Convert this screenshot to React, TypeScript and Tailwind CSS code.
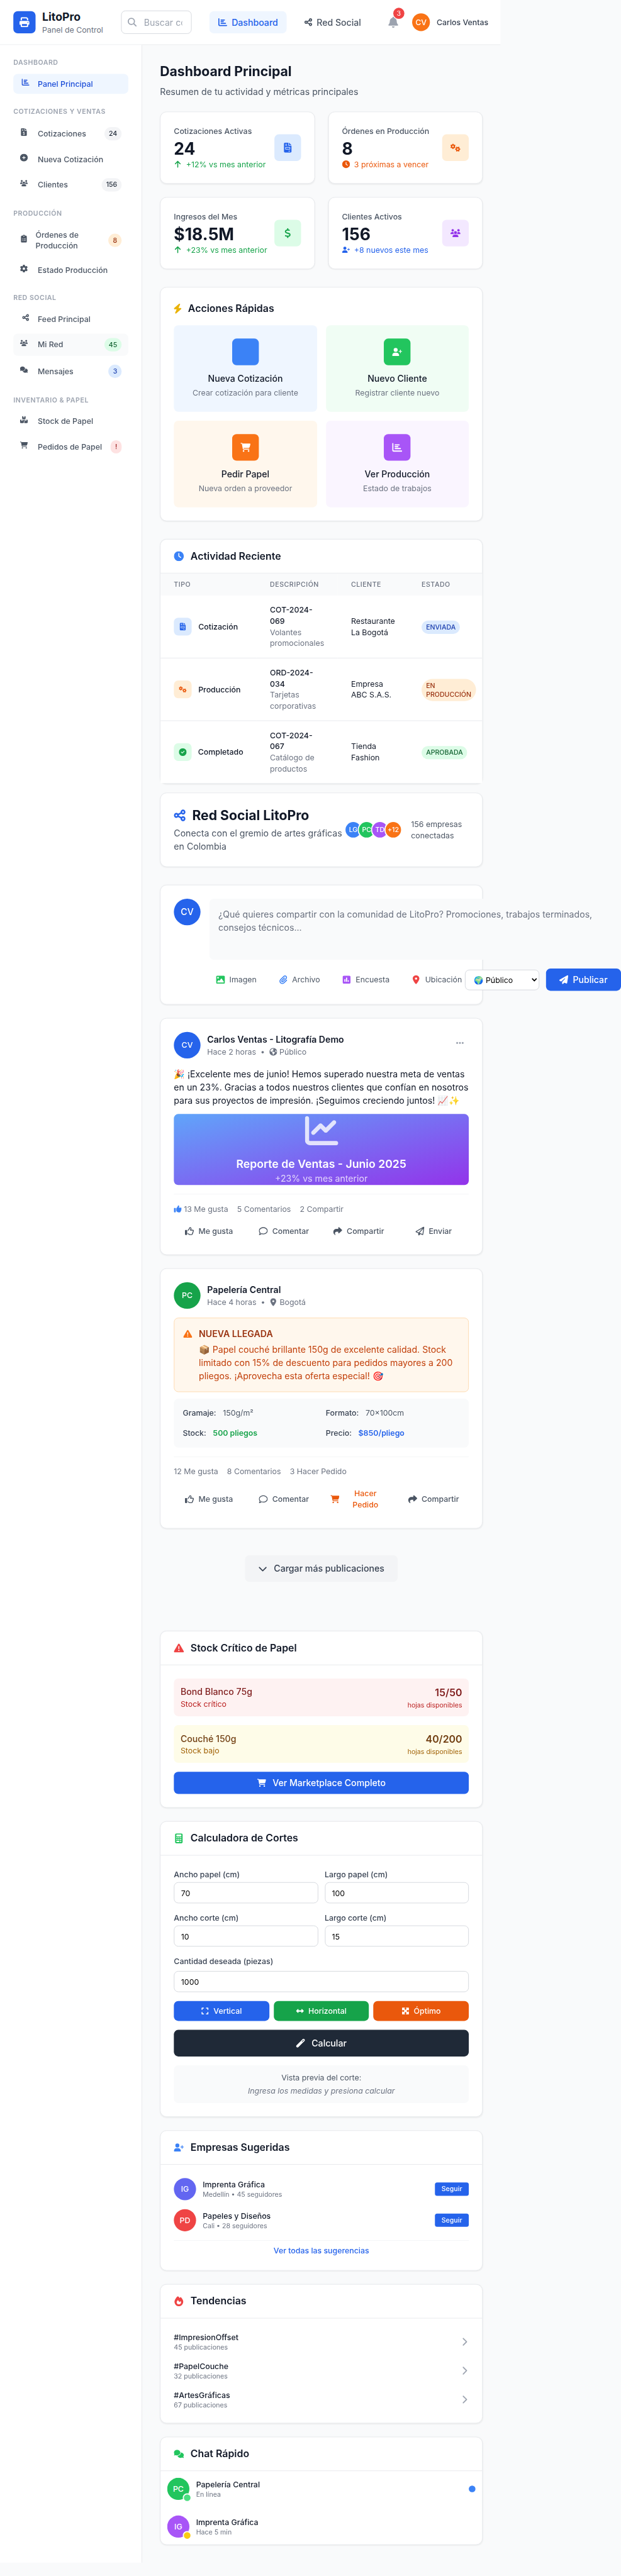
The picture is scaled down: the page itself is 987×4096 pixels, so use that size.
import React from "react";
import {
  FaArrowUp, FaBell, FaBoxesStacked, FaCalculator, FaCartShopping, FaChartBar, FaChartLine,
  FaChevronDown, FaChevronRight, FaCircleCheck, FaCirclePlus, FaClipboardList, FaClock, FaComments,
  FaDollarSign, FaEarthAmericas, FaEllipsis, FaExpand, FaFileInvoice, FaFileInvoiceDollar, FaFire,
  FaGear, FaGears, FaImage, FaLeftRight, FaLocationDot, FaMagnifyingGlass, FaMaximize, FaPaperPlane,
  FaPaperclip, FaPrint, FaRegComment, FaRegPaperPlane, FaRegThumbsUp, FaShare, FaSquarePollVertical,
  FaThumbsUp, FaTriangleExclamation, FaUserPlus, FaUsers, FaWandMagic,
} from "react-icons/fa6";

type IconType = React.ComponentType<{ className?: string }>;

const ShareNodes: IconType = ({ className }) => (
  <svg viewBox="0 0 448 512" fill="currentColor" className={className}>
    <path
      fillRule="evenodd"
      d="M448 128C448 181 405 224 352 224C326.1 224 302.6 213.8 285.4 197.1L191.3 244.1C191.8 248 192 252 192 256C192 260 191.8 264 191.3 267.9L285.4 314.9C302.6 298.2 326.1 288 352 288C405 288 448 331 448 384C448 437 405 480 352 480C299 480 256 437 256 384C256 380 256.2 376 256.7 372.1L162.6 325.1C145.4 341.8 121.9 352 96 352C43 352 0 309 0 256C0 203 43 160 96 160C121.9 160 145.4 170.2 162.6 186.9L256.7 139.9C256.2 136 256 132 256 128C256 75 299 32 352 32C405 32 448 75 448 128zM96 288C113.7 288 128 273.7 128 256C128 238.3 113.7 224 96 224C78.3 224 64 238.3 64 256C64 273.7 78.3 288 96 288zM352 96C334.3 96 320 110.3 320 128C320 145.7 334.3 160 352 160C369.7 160 384 145.7 384 128C384 110.3 369.7 96 352 96zM352 416C369.7 416 384 401.7 384 384C384 366.3 369.7 352 352 352C334.3 352 320 366.3 320 384C320 401.7 334.3 416 352 416z"
    />
  </svg>
);

const Bolt: IconType = ({ className }) => (
  <svg viewBox="0 0 384 512" fill="currentColor" className={className}>
    <path d="M240.5 224H352C365.3 224 377.3 232.3 381.1 244.7C386.6 257.2 383.1 271.3 373.1 280.1L117.1 504.1C105.8 513.9 89.27 514.7 77.19 505.9C65.1 497.1 60.7 481.1 66.59 467.4L143.5 288H31.1C18.67 288 6.733 279.7 2.044 267.3C-2.645 254.8 .8944 240.7 10.93 231.9L266.9 7.918C278.2-1.92 294.7-2.669 306.8 6.114C318.9 14.9 323.3 30.87 317.4 44.61L240.5 224z" />
  </svg>
);

const card = "rounded-xl border border-[#e5e7eb] bg-white shadow-[0_1px_2px_0_rgba(0,0,0,0.05)]";

interface NavItem {
  icon: IconType;
  label: string;
  badge?: string;
  badgeClass?: string;
  rowClass?: string;
  centered?: boolean;
  narrow?: boolean;
}

const gray = "bg-[#f3f4f6] text-[#1f2937]";

const sections: { title: string; items: NavItem[] }[] = [
  {
    title: "Dashboard",
    items: [{ icon: FaChartBar, label: "Panel Principal", rowClass: "bg-[#eff6ff] text-[#1d4ed8]", centered: true }],
  },
  {
    title: "Cotizaciones y Ventas",
    items: [
      { icon: FaFileInvoiceDollar, label: "Cotizaciones", badge: "24", badgeClass: gray },
      { icon: FaCirclePlus, label: "Nueva Cotización" },
      { icon: FaUsers, label: "Clientes", badge: "156", badgeClass: gray },
    ],
  },
  {
    title: "Producción",
    items: [
      { icon: FaClipboardList, label: "Órdenes de Producción", badge: "8", badgeClass: "bg-[#ffedd5] text-[#9a3412]", narrow: true },
      { icon: FaGear, label: "Estado Producción" },
    ],
  },
  {
    title: "Red Social",
    items: [
      { icon: ShareNodes, label: "Feed Principal", centered: true },
      { icon: FaUsers, label: "Mi Red", badge: "45", badgeClass: "bg-[#dcfce7] text-[#166534]", rowClass: "bg-[#f9fafb] text-[#4b5563]" },
      { icon: FaComments, label: "Mensajes", badge: "3", badgeClass: "bg-[#dbeafe] text-[#1e40af]" },
    ],
  },
  {
    title: "Inventario & Papel",
    items: [
      { icon: FaBoxesStacked, label: "Stock de Papel" },
      { icon: FaCartShopping, label: "Pedidos de Papel", badge: "!", badgeClass: "bg-[#fee2e2] text-[#991b1b]" },
    ],
  },
];

function Header() {
  return (
    <header className="flex h-[81px] w-[901px] items-center border-b border-[#e5e7eb] bg-white pl-6">
      <div className="flex w-[162px] items-center gap-3">
        <div className="flex h-10 w-10 shrink-0 items-center justify-center rounded-lg bg-[#2563eb] text-white">
          <FaPrint className="h-[18px] w-auto" />
        </div>
        <div className="whitespace-nowrap">
          <div className="text-xl leading-7 font-bold text-[#111827]">LitoPro</div>
          <div className="text-sm text-[#6b7280]">Panel de Control</div>
        </div>
      </div>
      <div className="relative ml-8 w-[127px]">
        <FaMagnifyingGlass className="absolute top-[13px] left-3 h-4 w-4 text-[#9ca3af]" />
        <input
          className="h-[42px] w-full rounded-lg border border-[#d1d5db] bg-white pr-4 pl-10 text-base placeholder:text-[#9ca3af]"
          placeholder="Buscar cotizaciones..."
        />
      </div>
      <nav className="ml-8 flex gap-4 font-medium">
        <a className="flex h-10 w-[139px] items-center gap-2 rounded-lg bg-[#eff6ff] pl-4 whitespace-nowrap text-[#2563eb]">
          <FaChartBar className="h-4 w-auto" />
          Dashboard
        </a>
        <a className="flex h-10 w-[134px] items-center gap-2 rounded-lg pl-4 whitespace-nowrap text-[#4b5563]">
          <ShareNodes className="h-4 w-auto" />
          Red Social
        </a>
      </nav>
      <div className="relative ml-8">
        <FaBell className="h-5 w-auto text-[#9ca3af]" />
        <span className="absolute -top-4 left-[10px] flex h-5 w-5 items-center justify-center rounded-full bg-[#ef4444] text-xs text-white">
          3
        </span>
      </div>
      <div className="ml-6 flex items-center gap-3">
        <div className="flex h-8 w-8 items-center justify-center rounded-full bg-[#f97316] text-sm font-medium text-white">CV</div>
        <span className="text-sm font-medium whitespace-nowrap text-[#374151]">Carlos Ventas</span>
      </div>
    </header>
  );
}

function Sidebar() {
  return (
    <aside className="flex h-[4536px] w-64 shrink-0 flex-col gap-6 border-r border-[#e5e7eb] bg-white p-6">
      {sections.map((s) => (
        <div key={s.title}>
          <h3 className="mb-3 text-xs font-semibold tracking-wider whitespace-nowrap text-[#9ca3af] uppercase">{s.title}</h3>
          <div className="flex flex-col gap-2">
            {s.items.map((it) => (
              <div
                key={it.label}
                className={`flex items-center rounded-lg px-3 py-2 text-sm font-medium ${it.rowClass ?? "text-[#4b5563]"}`}
              >
                <span className={`mr-3 mb-1.5 flex shrink-0 ${it.narrow ? "w-4" : "w-5"} ${it.centered ? "justify-center" : ""}`}>
                  <it.icon className="h-[14px] w-auto shrink-0" />
                </span>
                <span className={it.narrow ? "w-[90px]" : "whitespace-nowrap"}>{it.label}</span>
                {it.badge && (
                  <span className={`ml-auto rounded-full px-2 py-1 text-xs font-medium ${it.badgeClass}`}>{it.badge}</span>
                )}
              </div>
            ))}
          </div>
        </div>
      ))}
    </aside>
  );
}

const stats = [
  { label: "Cotizaciones Activas", value: "24", sub: "+12% vs mes anterior", subIcon: FaArrowUp, subClass: "text-[#16a34a]", icon: FaFileInvoice, box: "bg-[#dbeafe] text-[#2563eb]" },
  { label: "Órdenes en Producción", value: "8", sub: "3 próximas a vencer", subIcon: FaClock, subClass: "text-[#ea580c]", icon: FaGears, box: "bg-[#ffedd5] text-[#ea580c]" },
  { label: "Ingresos del Mes", value: "$18.5M", sub: "+23% vs mes anterior", subIcon: FaArrowUp, subClass: "text-[#16a34a]", icon: FaDollarSign, box: "bg-[#dcfce7] text-[#16a34a]" },
  { label: "Clientes Activos", value: "156", sub: "+8 nuevos este mes", subIcon: FaUserPlus, subClass: "text-[#2563eb]", icon: FaUsers, box: "bg-[#f3e8ff] text-[#9333ea]" },
];

const actions: { title: string; sub: string; icon: IconType | null; tile: string; box: string }[] = [
  { title: "Nueva Cotización", sub: "Crear cotización para cliente", icon: null, tile: "bg-[#eff6ff]", box: "bg-[#3b82f6]" },
  { title: "Nuevo Cliente", sub: "Registrar cliente nuevo", icon: FaUserPlus, tile: "bg-[#f0fdf4]", box: "bg-[#22c55e]" },
  { title: "Pedir Papel", sub: "Nueva orden a proveedor", icon: FaCartShopping, tile: "bg-[#fff7ed]", box: "bg-[#f97316]" },
  { title: "Ver Producción", sub: "Estado de trabajos", icon: FaChartBar, tile: "bg-[#faf5ff]", box: "bg-[#a855f7]" },
];

const activity = [
  { type: "Cotización", icon: FaFileInvoice, box: "bg-[#dbeafe] text-[#2563eb]", code: "COT-2024-069", desc: "Volantes promocionales", client: "Restaurante La Bogotá", state: "Enviada", badge: "bg-[#dbeafe] text-[#1e40af]" },
  { type: "Producción", icon: FaGears, box: "bg-[#ffedd5] text-[#ea580c]", code: "ORD-2024-034", desc: "Tarjetas corporativas", client: "Empresa ABC S.A.S.", state: "En Producción", badge: "bg-[#ffedd5] text-[#9a3412]" },
  { type: "Completado", icon: FaCircleCheck, box: "bg-[#dcfce7] text-[#16a34a]", code: "COT-2024-067", desc: "Catálogo de productos", client: "Tienda Fashion", state: "Aprobada", badge: "bg-[#dcfce7] text-[#166534]" },
];

function CardHeader({ icon: Icon, color, title }: { icon: IconType; color: string; title: string }) {
  return (
    <div className="flex items-center gap-3 border-b border-[#e5e7eb] px-6 py-4">
      <Icon className={`h-[18px] w-auto ${color}`} />
      <h2 className="text-lg leading-7 font-semibold text-[#111827]">{title}</h2>
    </div>
  );
}

function Stats() {
  return (
    <div className="mt-6 grid grid-cols-2 gap-6">
      {stats.map((s) => (
        <div key={s.label} className={`${card} flex items-center justify-between p-6`}>
          <div className="whitespace-nowrap">
            <div className="text-sm font-medium text-[#4b5563]">{s.label}</div>
            <div className="mt-1 text-3xl leading-9 font-bold text-[#111827]">{s.value}</div>
            <div className={`flex items-center gap-2 text-sm ${s.subClass}`}>
              <s.subIcon className="h-[14px] w-auto" />
              {s.sub}
            </div>
          </div>
          <div className={`-ml-4 flex h-12 w-12 shrink-0 items-center justify-center rounded-lg ${s.box}`}>
            <s.icon className="h-[18px] w-auto" />
          </div>
        </div>
      ))}
    </div>
  );
}

function QuickActions() {
  return (
    <section className={`${card} mt-8 p-6`}>
      <div className="mb-4 flex items-center gap-3">
        <Bolt className="h-[18px] w-auto text-[#eab308]" />
        <h2 className="text-lg leading-7 font-semibold text-[#111827]">Acciones Rápidas</h2>
      </div>
      <div className="grid grid-cols-2 gap-4">
        {actions.map((a) => (
          <div key={a.title} className={`flex flex-col items-center rounded-lg p-6 ${a.tile}`}>
            <div className={`mb-3 flex h-12 w-12 items-center justify-center rounded-lg text-white ${a.box}`}>
              {a.icon && <a.icon className="h-[18px] w-auto" />}
            </div>
            <div className="font-medium text-[#111827]">{a.title}</div>
            <div className="mt-1 text-sm text-[#6b7280]">{a.sub}</div>
          </div>
        ))}
      </div>
    </section>
  );
}

function Activity() {
  return (
    <section className={`${card} mt-8`}>
      <CardHeader icon={FaClock} color="text-[#3b82f6]" title="Actividad Reciente" />
      <div className="overflow-hidden">
        <table className="w-[593px] table-fixed border-collapse text-left text-sm">
          <colgroup>
            <col className="w-[173px]" />
            <col className="w-[146px]" />
            <col className="w-[127px]" />
            <col className="w-[147px]" />
          </colgroup>
          <thead className="bg-[#f9fafb]">
            <tr>
              {["Tipo", "Descripción", "Cliente", "Estado"].map((h) => (
                <th key={h} className="px-6 py-3 text-xs font-medium tracking-wider text-[#6b7280] uppercase">{h}</th>
              ))}
            </tr>
          </thead>
          <tbody className="divide-y divide-[#e5e7eb] bg-white">
            {activity.map((r) => (
              <tr key={r.code}>
                <td className="px-6 py-4">
                  <div className="flex items-center gap-3">
                    <span className={`flex h-8 w-8 items-center justify-center rounded-lg ${r.box}`}>
                      <r.icon className="h-[14px] w-auto" />
                    </span>
                    <span className="font-medium text-[#111827]">{r.type}</span>
                  </div>
                </td>
                <td className="px-6 py-4">
                  <div className="font-medium text-[#111827]">{r.code}</div>
                  <div className="text-[#6b7280]">{r.desc}</div>
                </td>
                <td className="px-6 py-4 text-[#111827]">{r.client}</td>
                <td className="py-4 pr-4 pl-6">
                  <span className={`mt-0.5 inline-flex max-w-[98px] rounded-full px-2 py-1 text-xs font-medium uppercase ${r.badge}`}>
                    {r.state}
                  </span>
                </td>
              </tr>
            ))}
          </tbody>
        </table>
      </div>
    </section>
  );
}

function SocialHeader() {
  const people = [
    { t: "LG", c: "bg-[#3b82f6]" },
    { t: "PC", c: "bg-[#22c55e]" },
    { t: "TD", c: "bg-[#a855f7]" },
    { t: "+12", c: "bg-[#f97316]" },
  ];
  return (
    <section className={`${card} mt-4 flex items-center p-6`}>
      <div className="w-[307px] shrink-0">
        <h2 className="flex items-center gap-3 text-2xl leading-8 font-bold whitespace-nowrap text-[#111827]">
          <ShareNodes className="h-6 w-auto text-[#2563eb]" />
          Red Social LitoPro
        </h2>
        <p className="mt-1 text-[#4b5563]">Conecta con el gremio de artes gráficas en Colombia</p>
      </div>
      <div className="flex -space-x-2">
        {people.map((p) => (
          <div key={p.t} className={`flex h-8 w-8 items-center justify-center rounded-full border-2 border-white text-xs font-medium text-white ${p.c}`}>
            {p.t}
          </div>
        ))}
      </div>
      <div className="ml-4 w-[104px] text-sm text-[#4b5563]">156 empresas conectadas</div>
    </section>
  );
}

function Composer() {
  const tools = [
    { t: "Imagen", i: FaImage, c: "text-[#22c55e]" },
    { t: "Archivo", i: FaPaperclip, c: "text-[#3b82f6]" },
    { t: "Encuesta", i: FaSquarePollVertical, c: "text-[#a855f7]" },
    { t: "Ubicación", i: FaLocationDot, c: "text-[#ef4444]" },
  ];
  return (
    <section className={`${card} mt-8 flex gap-4 p-6`}>
      <div className="flex h-12 w-12 shrink-0 items-center justify-center rounded-full bg-[#2563eb] font-medium text-white">CV</div>
      <div className="w-[741px] shrink-0">
        <textarea
          className="block h-[110px] w-full resize-none rounded-lg bg-[#f9fafb] p-4 text-base placeholder:text-[#6b7280]"
          placeholder="¿Qué quieres compartir con la comunidad de LitoPro? Promociones, trabajos terminados, consejos técnicos..."
        />
        <div className="mt-4 flex items-center">
          <div className="flex w-[459.5px] shrink-0 gap-4">
            {tools.map((t) => (
              <div key={t.t} className="flex items-center gap-2 px-3 text-sm text-[#4b5563]">
                <t.i className={`h-4 w-auto ${t.c}`} />
                {t.t}
              </div>
            ))}
          </div>
          <select className="h-[37px] w-[134px] shrink-0 rounded-lg border border-[#d1d5db] bg-white px-3 text-sm text-black">
            <option>🌍 Público</option>
          </select>
          <button className="ml-auto flex h-10 w-[135px] items-center justify-center gap-2 rounded-lg bg-[#2563eb] font-medium text-white">
            <FaPaperPlane className="h-4 w-auto" />
            Publicar
          </button>
        </div>
      </div>
    </section>
  );
}

function PostAuthor({ initials, color, name, time, icon: Icon, place, menu }: {
  initials: string; color: string; name: string; time: string; icon: IconType; place: string; menu?: boolean;
}) {
  return (
    <div className="flex items-center gap-3">
      <div className={`flex h-12 w-12 items-center justify-center rounded-full text-sm font-medium text-white ${color}`}>{initials}</div>
      <div>
        <div className="font-semibold text-[#111827]">{name}</div>
        <div className="flex items-center gap-2 text-sm text-[#6b7280]">
          <span>{time}</span>
          <span>•</span>
          <span className="flex items-center gap-1">
            <Icon className="h-[14px] w-auto" />
            {place}
          </span>
        </div>
      </div>
      {menu && <FaEllipsis className="mr-2 mb-2 ml-auto h-4 w-auto text-[#9ca3af]" />}
    </div>
  );
}

function PostAction({ icon: Icon, label, order }: { icon: IconType; label: string; order?: boolean }) {
  return (
    <div
      className={`flex w-[126.75px] items-center gap-2 px-3 py-2 text-center text-sm font-medium ${
        order ? "text-[#ea580c]" : "justify-center text-[#4b5563]"
      }`}
    >
      <Icon className="h-4 w-auto shrink-0" />
      <span className={order ? "flex-1 px-3" : ""}>{label}</span>
    </div>
  );
}

function Posts() {
  return (
    <>
      <article className={`${card} mt-6 p-6`}>
        <PostAuthor initials="CV" color="bg-[#2563eb]" name="Carlos Ventas - Litografía Demo" time="Hace 2 horas" icon={FaEarthAmericas} place="Público" menu />
        <p className="mt-4 -mr-2 text-[#111827]">
          🎉 ¡Excelente mes de junio! Hemos superado nuestra meta de ventas<br />
          en un 23%. Gracias a todos nuestros clientes que confían en nosotros<br />
          para sus proyectos de impresión. ¡Seguimos creciendo juntos! 📈✨
        </p>
        <div className="mt-3 flex h-32 flex-col items-center rounded-lg bg-linear-to-br/srgb from-[#60a5fa] to-[#9333ea] text-white">
          <FaChartLine className="h-[60px] w-auto shrink-0 opacity-80" />
          <div className="mt-4 text-xl leading-7 font-semibold">Reporte de Ventas - Junio 2025</div>
          <div className="opacity-75">+23% vs mes anterior</div>
        </div>
        <div className="mt-4 flex gap-4 border-t border-[#f3f4f6] pt-4 text-sm text-[#6b7280]">
          <span className="flex items-center gap-1">
            <FaThumbsUp className="h-[14px] w-auto text-[#3b82f6]" />
            13 Me gusta
          </span>
          <span>5 Comentarios</span>
          <span>2 Compartir</span>
        </div>
        <div className="mt-3 flex items-center gap-2">
          <PostAction icon={FaRegThumbsUp} label="Me gusta" />
          <PostAction icon={FaRegComment} label="Comentar" />
          <PostAction icon={FaShare} label="Compartir" />
          <PostAction icon={FaRegPaperPlane} label="Enviar" />
        </div>
      </article>
      <article className={`${card} mt-6 p-6`}>
        <PostAuthor initials="PC" color="bg-[#16a34a]" name="Papelería Central" time="Hace 4 horas" icon={FaLocationDot} place="Bogotá" />
        <div className="mt-4 flex gap-3 rounded-lg border border-[#fed7aa] bg-[#fff7ed] p-4">
          <FaTriangleExclamation className="mt-1 h-4 w-auto shrink-0 text-[#f97316]" />
          <div className="whitespace-nowrap">
            <div className="font-semibold text-[#9a3412]">NUEVA LLEGADA</div>
            <p className="mt-1 text-[#c2410c]">
              📦 Papel couché brillante 150g de excelente calidad. Stock<br />
              limitado con 15% de descuento para pedidos mayores a 200<br />
              pliegos. ¡Aprovecha esta oferta especial! 🎯
            </p>
          </div>
        </div>
        <div className="mt-3 grid grid-cols-2 gap-4 rounded-lg bg-[#f9fafb] p-4 text-sm text-[#374151]">
          <div className="flex gap-3"><span className="font-medium">Gramaje:</span><span className="text-[#4b5563]">150g/m²</span></div>
          <div className="flex gap-3"><span className="font-medium">Formato:</span><span className="text-[#4b5563]">70×100cm</span></div>
          <div className="flex gap-3"><span className="font-medium">Stock:</span><span className="font-semibold text-[#16a34a]">500 pliegos</span></div>
          <div className="flex gap-3"><span className="font-medium">Precio:</span><span className="font-semibold text-[#2563eb]">$850/pliego</span></div>
        </div>
        <div className="mt-4 flex gap-4 border-t border-[#f3f4f6] pt-4 text-sm text-[#6b7280]">
          <span>12 Me gusta</span>
          <span>8 Comentarios</span>
          <span>3 Hacer Pedido</span>
        </div>
        <div className="mt-3 flex items-center gap-2">
          <PostAction icon={FaRegThumbsUp} label="Me gusta" />
          <PostAction icon={FaRegComment} label="Comentar" />
          <PostAction icon={FaCartShopping} label="Hacer Pedido" order />
          <PostAction icon={FaShare} label="Compartir" />
        </div>
      </article>
      <div className="mt-12 flex justify-center">
        <button className="flex h-12 items-center gap-3 rounded-lg bg-[#f3f4f6] px-6 font-medium text-[#374151]">
          <FaChevronDown className="h-4 w-auto" />
          Cargar más publicaciones
        </button>
      </div>
    </>
  );
}

function StockCard() {
  const rows = [
    { n: "Bond Blanco 75g", s: "Stock crítico", q: "15/50", bg: "bg-[#fef2f2]", strong: "text-[#7f1d1d]", soft: "text-[#b91c1c]" },
    { n: "Couché 150g", s: "Stock bajo", q: "40/200", bg: "bg-[#fefce8]", strong: "text-[#713f12]", soft: "text-[#a16207]" },
  ];
  return (
    <section className={`${card} mt-[88px]`}>
      <CardHeader icon={FaTriangleExclamation} color="text-[#ef4444]" title="Stock Crítico de Papel" />
      <div className="flex flex-col gap-4 p-6">
        {rows.map((r) => (
          <div key={r.n} className={`flex items-center justify-between rounded-lg p-3 ${r.bg}`}>
            <div>
              <div className={`font-medium ${r.strong}`}>{r.n}</div>
              <div className={`text-sm ${r.soft}`}>{r.s}</div>
            </div>
            <div className="text-right">
              <div className={`text-lg leading-7 font-semibold ${r.strong}`}>{r.q}</div>
              <div className={`text-xs ${r.soft}`}>hojas disponibles</div>
            </div>
          </div>
        ))}
        <button className="flex h-10 items-center justify-center gap-3 rounded-lg bg-[#2563eb] font-medium text-white">
          <FaCartShopping className="h-4 w-auto" />
          Ver Marketplace Completo
        </button>
      </div>
    </section>
  );
}

function Field({ label, value, gap = "mt-1" }: { label: string; value: string; gap?: string }) {
  return (
    <label className="block text-sm font-medium text-[#374151]">
      {label}
      <input
        className={`block h-[38px] w-full rounded-lg border border-[#d1d5db] bg-white px-3 text-sm font-normal text-black ${gap}`}
        defaultValue={value}
      />
    </label>
  );
}

function CutCalculator() {
  const modes = [
    { t: "Vertical", i: FaExpand, c: "bg-[#2563eb]" },
    { t: "Horizontal", i: FaLeftRight, c: "bg-[#16a34a]" },
    { t: "Óptimo", i: FaMaximize, c: "bg-[#ea580c]" },
  ];
  return (
    <section className={`${card} mt-6`}>
      <CardHeader icon={FaCalculator} color="text-[#22c55e]" title="Calculadora de Cortes" />
      <div className="flex flex-col gap-4 p-6">
        <div className="grid grid-cols-2 gap-x-3 gap-y-4">
          <Field label="Ancho papel (cm)" value="70" />
          <Field label="Largo papel (cm)" value="100" />
          <Field label="Ancho corte (cm)" value="10" />
          <Field label="Largo corte (cm)" value="15" />
        </div>
        <Field label="Cantidad deseada (piezas)" value="1000" gap="mt-2" />
        <div className="grid grid-cols-3 gap-2">
          {modes.map((m) => (
            <button key={m.t} className={`flex h-9 items-center justify-center gap-2 rounded-lg text-sm font-medium text-white ${m.c}`}>
              <m.i className="h-[14px] w-auto" />
              {m.t}
            </button>
          ))}
        </div>
        <button className="flex h-12 items-center justify-center gap-3 rounded-lg bg-[#1f2937] font-medium text-white">
          <FaWandMagic className="h-4 w-auto" />
          Calcular
        </button>
        <div className="rounded-lg bg-[#f9fafb] p-3 text-center text-sm">
          <div className="text-[#4b5563]">Vista previa del corte:</div>
          <div className="mt-1 text-[#6b7280] italic">Ingresa los medidas y presiona calcular</div>
        </div>
      </div>
    </section>
  );
}

function Suggested() {
  const list = [
    { t: "IG", c: "bg-[#6366f1]", n: "Imprenta Gráfica", s: "Medellín • 45 seguidores" },
    { t: "PD", c: "bg-[#ef4444]", n: "Papeles y Diseños", s: "Cali • 28 seguidores" },
  ];
  return (
    <section className={`${card} mt-6`}>
      <CardHeader icon={FaUserPlus} color="text-[#3b82f6]" title="Empresas Sugeridas" />
      <div className="flex flex-col gap-4 p-6">
        {list.map((p) => (
          <div key={p.t} className="flex items-center gap-3">
            <div className={`flex h-10 w-10 items-center justify-center rounded-full text-sm font-medium text-white ${p.c}`}>{p.t}</div>
            <div>
              <div className="text-sm font-medium text-[#111827]">{p.n}</div>
              <div className="text-xs text-[#6b7280]">{p.s}</div>
            </div>
            <button className="ml-auto rounded bg-[#2563eb] px-3 py-1 text-xs font-medium text-white">Seguir</button>
          </div>
        ))}
        <div className="border-t border-[#f3f4f6] pt-2 pb-px text-center text-sm font-medium text-[#2563eb]">Ver todas las sugerencias</div>
      </div>
    </section>
  );
}

function Trends() {
  const list = [
    ["#ImpresionOffset", "45 publicaciones"],
    ["#PapelCouche", "32 publicaciones"],
    ["#ArtesGráficas", "67 publicaciones"],
  ];
  return (
    <section className={`${card} mt-6`}>
      <CardHeader icon={FaFire} color="text-[#ef4444]" title="Tendencias" />
      <div className="flex flex-col gap-4 p-6">
        {list.map(([t, n]) => (
          <div key={t} className="flex items-center justify-between">
            <div>
              <div className="text-sm font-medium text-[#111827]">{t}</div>
              <div className="text-xs text-[#6b7280]">{n}</div>
            </div>
            <FaChevronRight className="h-4 w-auto text-[#9ca3af]" />
          </div>
        ))}
      </div>
    </section>
  );
}

function QuickChat() {
  const list = [
    { t: "PC", c: "bg-[#22c55e]", n: "Papelería Central", s: "En línea", dot: "bg-[#4ade80]", unread: true },
    { t: "IG", c: "bg-[#a855f7]", n: "Imprenta Gráfica", s: "Hace 5 min", dot: "bg-[#facc15]", unread: false },
  ];
  return (
    <section className={`${card} mt-6`}>
      <CardHeader icon={FaComments} color="text-[#22c55e]" title="Chat Rápido" />
      <div className="flex flex-col gap-1">
        {list.map((p) => (
          <div key={p.t} className="flex items-center gap-3 p-3">
            <div className={`relative flex h-10 w-10 items-center justify-center rounded-full text-sm font-medium text-white ${p.c}`}>
              {p.t}
              <span className={`absolute -right-1 -bottom-1 h-4 w-4 rounded-full border-2 border-white ${p.dot}`} />
            </div>
            <div>
              <div className="text-sm font-medium text-[#111827]">{p.n}</div>
              <div className="text-xs text-[#6b7280]">{p.s}</div>
            </div>
            {p.unread && <span className="ml-auto h-3 w-3 rounded-full bg-[#3b82f6]" />}
          </div>
        ))}
      </div>
    </section>
  );
}

export default function App() {
  return (
    <div className="h-[4096px] w-[987px] overflow-hidden bg-[#f9fafb]">
      <div className="h-[4641px] w-[1118px] origin-top-left scale-x-[0.88283] scale-y-[0.88257] font-['Inter',sans-serif] text-base">
        <Header />
        <div className="flex">
          <Sidebar />
          <main className="w-[645px] shrink-0 px-8 pt-8">
            <h1 className="text-2xl leading-8 font-bold text-[#111827]">Dashboard Principal</h1>
            <p className="mt-2 text-[#4b5563]">Resumen de tu actividad y métricas principales</p>
            <Stats />
            <QuickActions />
            <Activity />
            <SocialHeader />
            <Composer />
            <Posts />
            <StockCard />
            <CutCalculator />
            <Suggested />
            <Trends />
            <QuickChat />
          </main>
        </div>
      </div>
    </div>
  );
}
